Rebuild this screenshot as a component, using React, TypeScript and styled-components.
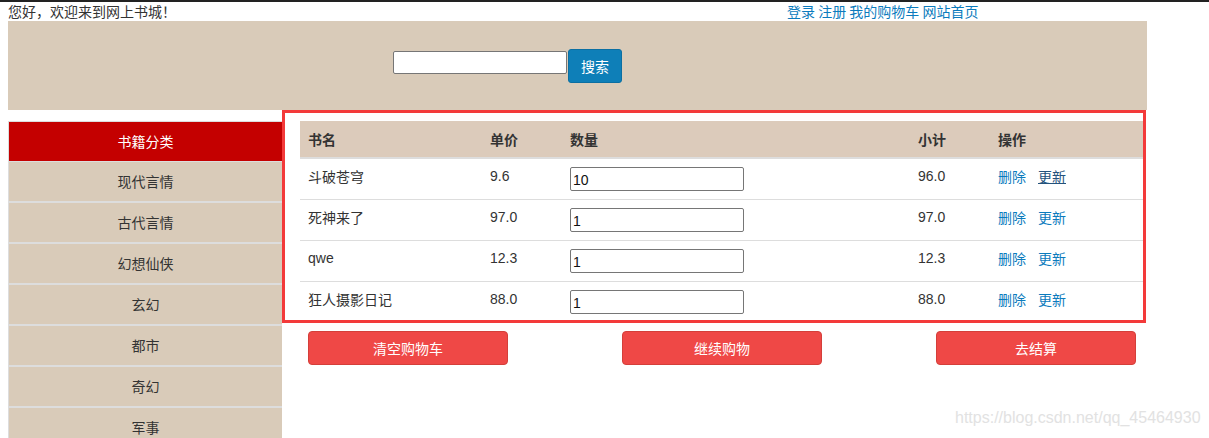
import React from 'react';
import styled, { createGlobalStyle } from 'styled-components';

interface CartItem {
  name: string;
  price: string;
  count: string;
  subtotal: string;
}

const items: CartItem[] = [
  { name: '斗破苍穹', price: '9.6', count: '10', subtotal: '96.0' },
  { name: '死神来了', price: '97.0', count: '1', subtotal: '97.0' },
  { name: 'qwe', price: '12.3', count: '1', subtotal: '12.3' },
  { name: '狂人摄影日记', price: '88.0', count: '1', subtotal: '88.0' },
];

const categories = ['现代言情', '古代言情', '幻想仙侠', '玄幻', '都市', '奇幻', '军事'];

const GlobalStyle = createGlobalStyle`
  html, body {
    margin: 0;
    padding: 0;
    background: #fff;
    overflow: hidden;
  }
  body {
    font-family: "Liberation Sans", "Noto Sans CJK SC", sans-serif;
    font-size: 14px;
    color: #333;
    border-top: 2px solid #222;
  }
`;

const App: React.FC = () => {
  return (
    <Page>
      <GlobalStyle />
      <TopBar>
        <Welcome>您好，欢迎来到网上书城！</Welcome>
        <TopLinks>
          <TopLink>登录</TopLink> <TopLink>注册</TopLink> <TopLink>我的购物车</TopLink>{' '}
          <TopLink>网站首页</TopLink>
        </TopLinks>
      </TopBar>

      <Header>
        <SearchInput type="text" />
        <SearchButton>搜索</SearchButton>
      </Header>

      <Body>
        <Sidebar>
          <SideTitle>书籍分类</SideTitle>
          {categories.map((c) => (
            <SideItem key={c}>{c}</SideItem>
          ))}
        </Sidebar>

        <Main>
          <CartBox>
            <Table>
              <colgroup>
                <col style={{ width: 182 }} />
                <col style={{ width: 80 }} />
                <col style={{ width: 348 }} />
                <col style={{ width: 80 }} />
                <col />
              </colgroup>
              <thead>
                <tr>
                  <Th>书名</Th>
                  <Th>单价</Th>
                  <Th>数量</Th>
                  <Th>小计</Th>
                  <Th>操作</Th>
                </tr>
              </thead>
              <tbody>
                {items.map((item, index) => (
                  <Row key={index}>
                    <Td>{item.name}</Td>
                    <Td>{item.price}</Td>
                    <Td>
                      <CountInput type="text" defaultValue={item.count} />
                    </Td>
                    <Td>{item.subtotal}</Td>
                    <Td>
                      <Action>删除</Action>
                      <Action $hover={index === 0}>更新</Action>
                    </Td>
                  </Row>
                ))}
              </tbody>
            </Table>
          </CartBox>
          <ButtonBar>
            <RedButton>清空购物车</RedButton>
            <RedButton>继续购物</RedButton>
            <RedButton>去结算</RedButton>
          </ButtonBar>
        </Main>
      </Body>

      <Watermark>https://blog.csdn.net/qq_45464930</Watermark>
    </Page>
  );
};

export default App;

const Page = styled.div`
  position: relative;
  width: 1209px;
  height: 436px;
  padding: 0 8px;
  box-sizing: border-box;
`;

const TopBar = styled.div`
  width: 1139px;
  height: 19px;
  display: flex;
  justify-content: space-between;
  align-items: center;
  line-height: 19px;
`;

const Welcome = styled.span`
  font-family: "Noto Sans CJK SC", sans-serif;
  font-size: 14px;
  color: #333;
`;

const TopLinks = styled.div`
  width: 360px;
  font-family: "Noto Sans CJK SC", sans-serif;
  font-size: 14px;
`;

const TopLink = styled.a`
  color: #0b7bbd;
  cursor: pointer;
`;

const Header = styled.div`
  width: 1139px;
  height: 89px;
  background: #d9cbb9;
  display: flex;
  align-items: center;
  padding-left: 385px;
  box-sizing: border-box;
`;

const SearchInput = styled.input`
  width: 174px;
  height: 23px;
  box-sizing: border-box;
  border: 1px solid #767676;
  border-radius: 2px;
  margin-top: -6px;
  padding: 1px 2px;
`;

const SearchButton = styled.button`
  width: 54px;
  height: 34px;
  margin-left: 1px;
  background: #0e7fb8;
  color: #fff;
  border: 1px solid #0b6fa2;
  border-radius: 3px;
  font-family: "Noto Sans CJK SC", sans-serif;
  font-size: 14px;
  padding: 0;
`;

const Body = styled.div`
  display: flex;
  align-items: flex-start;
`;

const Sidebar = styled.div`
  width: 273px;
  margin-top: 11px;
  border-left: 1px solid #ddd;
  background: #d9cbb9;
`;

const SideTitle = styled.div`
  height: 41px;
  line-height: 39px;
  background: #c40000;
  color: #fff;
  text-align: center;
  font-family: "Noto Sans CJK SC", sans-serif;
  font-size: 14px;
  border-top: 1px solid #ddd;
  border-bottom: 1px solid #ddd;
  box-sizing: border-box;
`;

const SideItem = styled.div`
  height: 41px;
  line-height: 39px;
  text-align: center;
  border-bottom: 2px solid #ddd;
  box-sizing: border-box;
  font-family: "Noto Sans CJK SC", sans-serif;
  font-size: 14px;
  color: #333;
`;

const Main = styled.div`
  width: 864px;
`;

const CartBox = styled.div`
  border: 3px solid #f33a3a;
  height: 213px;
  box-sizing: border-box;
  padding: 8px 0 0 15px;
`;

const Table = styled.table`
  width: 843px;
  border-collapse: collapse;
  table-layout: fixed;
`;

const Th = styled.th`
  height: 36px;
  background: #dccbbb;
  border-bottom: 2px solid #ddd;
  text-align: left;
  padding: 0 8px;
  font-weight: bold;
  font-family: "Noto Sans CJK SC", sans-serif;
  font-size: 14px;
  color: #333;
`;

const Row = styled.tr`
  & + & td {
    border-top: 1px solid #ddd;
  }
`;

const Td = styled.td`
  height: 41px;
  padding: 0 8px 6px;
  font-size: 14px;
  color: #333;
  box-sizing: border-box;
`;

const CountInput = styled.input`
  width: 174px;
  height: 24px;
  box-sizing: border-box;
  border: 1px solid #767676;
  border-radius: 2px;
  padding: 2px 2px 0;
  font-family: "Liberation Sans", sans-serif;
  font-size: 14px;
  color: #111;
  margin-top: 6px;
  vertical-align: middle;
`;

const Action = styled.a<{ $hover?: boolean }>`
  font-family: "Noto Sans CJK SC", sans-serif;
  color: ${(p) => (p.$hover ? '#23527c' : '#0b7bbd')};
  text-decoration: ${(p) => (p.$hover ? 'underline' : 'none')};
  margin-right: 12px;
  cursor: pointer;
`;

const ButtonBar = styled.div`
  display: flex;
  justify-content: space-between;
  width: 854px;
  padding: 8px 0 0 26px;
  box-sizing: border-box;
`;

const RedButton = styled.button`
  width: 200px;
  height: 34px;
  background: #ef4846;
  border: 1px solid #d43f3a;
  border-radius: 4px;
  color: #fff;
  font-family: "Noto Sans CJK SC", sans-serif;
  font-size: 14px;
`;

const Watermark = styled.div`
  position: absolute;
  left: 955px;
  top: 407px;
  font-family: "Liberation Sans", sans-serif;
  font-size: 16px;
  color: #e2e2e2;
`;
